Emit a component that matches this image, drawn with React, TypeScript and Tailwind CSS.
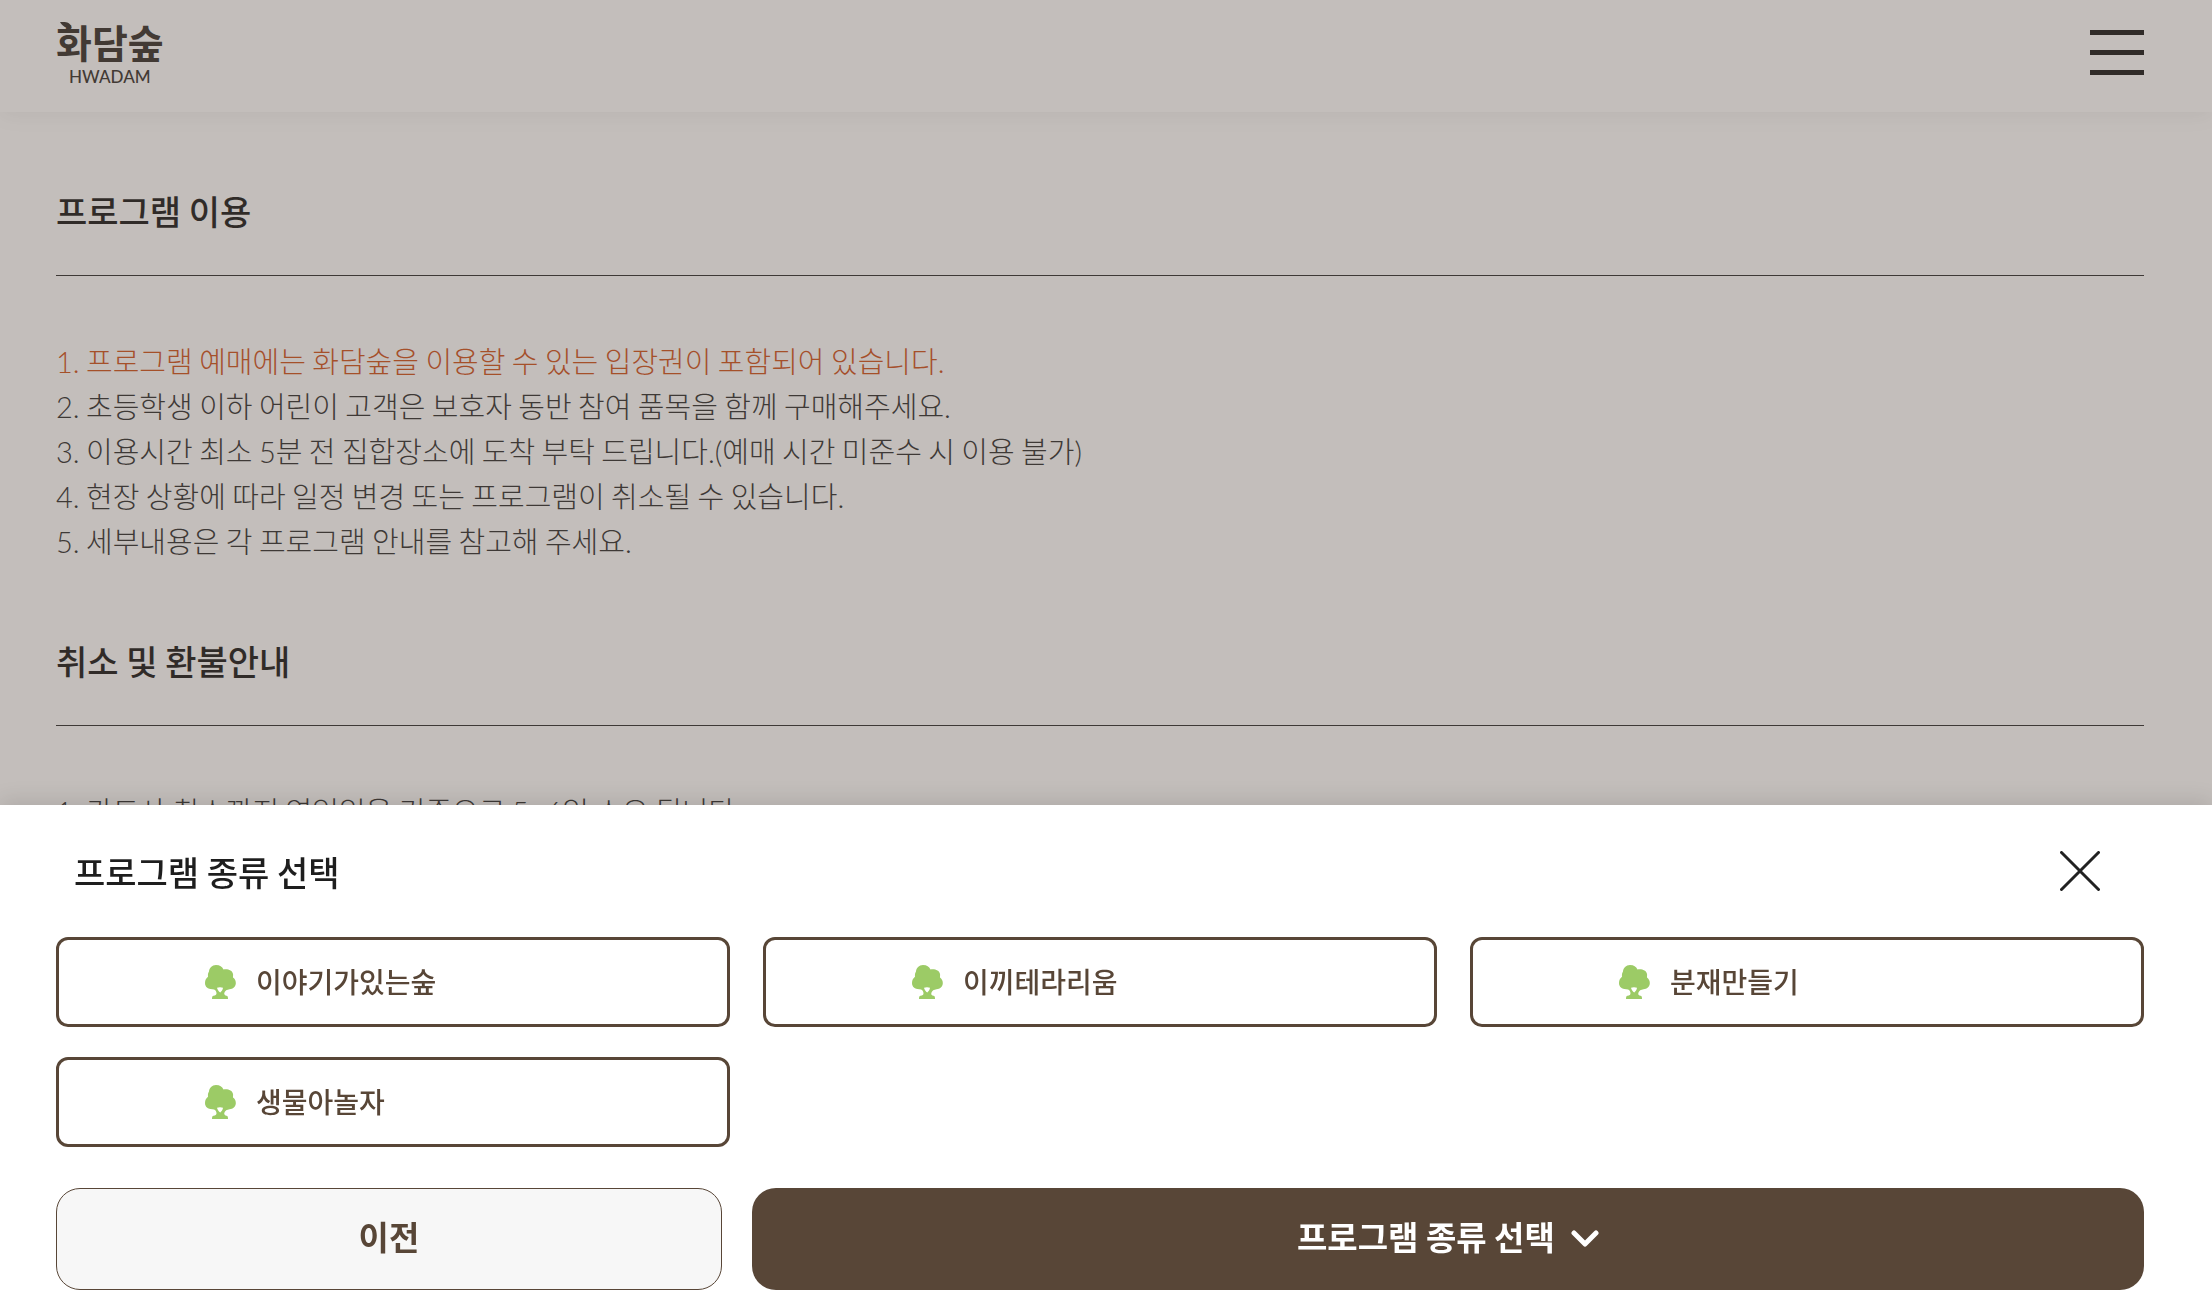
import React, { useState } from 'react';

interface NoticeSection {
    title: string;
    items: { text: string; highlight?: boolean }[];
}

const sections: NoticeSection[] = [
    {
        title: '프로그램 이용',
        items: [
            { text: '1. 프로그램 예매에는 화담숲을 이용할 수 있는 입장권이 포함되어 있습니다.', highlight: true },
            { text: '2. 초등학생 이하 어린이 고객은 보호자 동반 참여 품목을 함께 구매해주세요.' },
            { text: '3. 이용시간 최소 5분 전 집합장소에 도착 부탁 드립니다.(예매 시간 미준수 시 이용 불가)' },
            { text: '4. 현장 상황에 따라 일정 변경 또는 프로그램이 취소될 수 있습니다.' },
            { text: '5. 세부내용은 각 프로그램 안내를 참고해 주세요.' }
        ]
    },
    {
        title: '취소 및 환불안내',
        items: [{ text: '1. 카드사 취소까지 영업일을 기준으로 5~6일 소요 됩니다.' }]
    }
];

const programs = ['이야기가있는숲', '이끼테라리움', '분재만들기', '생물아놀자'];

// Digits and punctuation are set in Lato, Hangul in the page font
const NoticeText = ({ text }: { text: string }) => (
    <>
        {text.split(/([\d.~()]+)/).map((part, i) =>
            i % 2 ? <span key={i} className="font-['Lato'] leading-none">{part}</span> : part
        )}
    </>
);

const TreeIcon = () => (
    <svg width="31" height="34" viewBox="0 0 31 34" fill="none" aria-hidden="true">
        <path
            d="M11 0C15 0 17 1.500 18.500 4.500C22 3.500 27.500 5 28 9C28.300 10.500 27.800 11.500 28 12.500C30 14 31 16 30.800 18.500C30.500 22 28 24 24.500 24.300C22 24.800 20 25.500 19.300 28C19 29.800 20 30.500 21.500 30.800C22.800 31 23 32 23 34H7C7 32 7.300 31 8.500 30.800C10.500 30.500 11.600 29.800 11.500 28C11.200 25.500 10 24.500 7.500 24.200C3 24.300 0 22 0 18C0 15 1.200 13.300 3 11.800C2.800 9.500 3 8 4 6.500C4.200 3 7 0 11 0Z"
            fill="#9CCB66"
        />
        <path d="M12 22.800C13.500 22 16.500 22 18 22.800C17.800 25 16.500 26 15.300 27.600C13.800 26.500 12.500 25 12 22.800Z" fill="white" />
    </svg>
);

const Logo = () => (
    <a href="#" className="relative flex flex-col items-center text-[#3a3531]">
        <svg className="absolute left-1 top-0" width="12" height="6" viewBox="0 0 12 6" aria-hidden="true">
            <path d="M0 0C6 -0.500 11 0.500 11.500 6C6 6 3 5 0 0Z" fill="currentColor" />
        </svg>
        <span className="text-[39px] leading-[38px] font-bold">화담숲</span>
        <span className="mt-2 font-['Lato'] text-[17px] leading-[18px] font-medium">HWADAM</span>
    </a>
);

export default function App() {
    const [selected, setSelected] = useState('');

    return (
        <div className="h-screen overflow-hidden bg-white font-['Noto_Sans_CJK_KR','Noto_Sans',sans-serif] text-[#1e1e1e]">
            <header className="flex h-28 items-start justify-between bg-white pt-[22px] pl-14 pr-[68px] shadow-[0_4px_20px_rgba(0,0,0,0.06)]">
                <Logo />
                <button type="button" aria-label="메뉴" className="mt-2 flex w-[54px] flex-col gap-[15px]">
                    <span className="h-[5px] bg-[#1e1e1e]" />
                    <span className="h-[5px] bg-[#1e1e1e]" />
                    <span className="h-[5px] bg-[#1e1e1e]" />
                </button>
            </header>

            <main className="flex flex-col gap-[72px] pt-[73px] pl-14 pr-[68px]">
                {sections.map(section => (
                    <section key={section.title}>
                        <h2 className="border-b border-[#333333] pb-[38px] text-[34px] leading-[52px] font-medium">{section.title}</h2>
                        <ul className="mt-[62px] text-[29px] leading-[45px] font-light text-[#333333]">
                            {section.items.map(item => (
                                <li key={item.text} className={item.highlight ? 'text-[#d2561f]' : ''}>
                                    <NoticeText text={item.text} />
                                </li>
                            ))}
                        </ul>
                    </section>
                ))}
            </main>

            {/* Dim layer */}
            <div className="fixed inset-0 bg-[#54453d]/35" />

            {/* Bottom sheet */}
            <div
                role="dialog"
                aria-labelledby="sheet-title"
                className="fixed inset-x-0 bottom-0 bg-white pt-10 pr-[68px] pb-[23px] pl-14 shadow-[0_-5px_20px_rgba(0,0,0,0.1)]"
            >
                <div className="mb-[38px] flex items-center justify-between pr-11 pl-[18px]">
                    <h2 id="sheet-title" className="text-[34px] leading-[54px] font-medium">프로그램 종류 선택</h2>
                    <button type="button" aria-label="닫기" className="pb-0.5">
                        <svg width="40" height="40" viewBox="0 0 40 40" fill="none">
                            <path d="M1.500 1.500L38.500 38.500M38.500 1.500L1.500 38.500" stroke="#222222" strokeWidth="3" strokeLinecap="round" />
                        </svg>
                    </button>
                </div>

                <div className="grid grid-cols-3 gap-x-[33px] gap-y-[30px]">
                    {programs.map(program => (
                        <button
                            key={program}
                            type="button"
                            aria-pressed={selected === program}
                            onClick={() => setSelected(program)}
                            className="flex h-[90px] items-center gap-5 rounded-xl border-3 border-[#584637] pl-[146px] text-[28px] font-medium text-[#584637]"
                        >
                            <TreeIcon />
                            <span className="pb-0.5">{program}</span>
                        </button>
                    ))}
                </div>

                <div className="mt-[41px] grid grid-cols-[22fr_46fr] gap-[30px]">
                    <button type="button" className="h-[102px] rounded-3xl border border-[#584637] bg-[#f7f7f7] pb-1 text-[33px] font-bold text-[#584637]">
                        이전
                    </button>
                    <button type="button" className="flex h-[102px] items-center justify-center gap-4 rounded-3xl bg-[#584637] text-[33px] font-bold text-white">
                        <span className="pb-1">프로그램 종류 선택</span>
                        <svg width="28" height="18" viewBox="0 0 28 18" fill="none" aria-hidden="true">
                            <path d="M3 3L14 14L25 3" stroke="white" strokeWidth="5" strokeLinecap="round" strokeLinejoin="round" />
                        </svg>
                    </button>
                </div>
            </div>
        </div>
    );
}
